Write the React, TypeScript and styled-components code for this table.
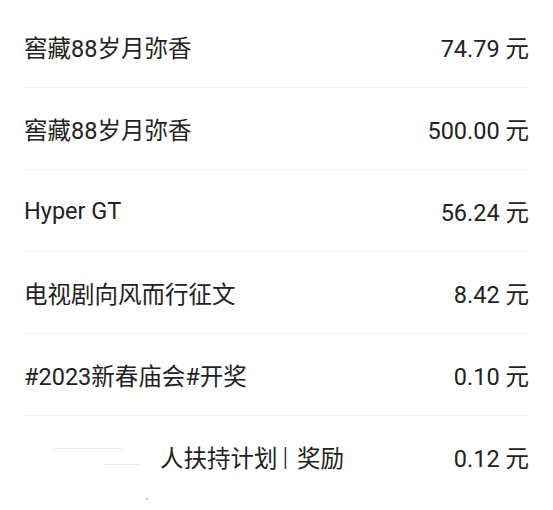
import React from "react";
import styled, { createGlobalStyle } from "styled-components";

const Global = createGlobalStyle`
  html, body { margin: 0; padding: 0; background: #ffffff; }
  body { font-family: Roboto, "Noto Sans CJK SC", sans-serif; }
`;

const List = styled.div`
  padding-top: 6px;
  display: flex;
  flex-direction: column;
`;

const Row = styled.div<{ $last?: boolean }>`
  height: 81px;
  margin: 0 24px;
  border-bottom: 1px solid ${(p) => (p.$last ? "transparent" : "#f2f2f2")};
  display: flex;
  align-items: center;
  justify-content: space-between;
  font-size: 23.5px;
  color: #222222;
`;

const Title = styled.div`
  display: flex;
  align-items: center;
  padding-top: 1px;
`;

const Amount = styled.div`
  white-space: pre;
  padding-top: 1px;
`;

const Redacted = styled.div`
  position: relative;
  width: 136px;
  height: 24px;
`;

const Smear = styled.span<{ $l: number; $t: number; $w: number }>`
  position: absolute;
  left: ${(p) => p.$l}px;
  top: ${(p) => p.$t}px;
  width: ${(p) => p.$w}px;
  height: 1px;
  background: #ececec;
`;

const Bar = styled.span`
  font-weight: 300;
  font-size: 25px;
  margin: 0 9px 0 5px;
`;

const Dot = styled.div`
  width: 2px;
  height: 2px;
  margin-left: 146px;
  background: #bbbbbb;
`;

const rows = [
  { t: "窖藏88岁月弥香", a: "74.79 元" },
  { t: "窖藏88岁月弥香", a: "500.00 元" },
  { t: "Hyper GT", a: "56.24 元" },
  { t: "电视剧向风而行征文", a: "8.42 元" },
  { t: "#2023新春庙会#开奖", a: "0.10 元" },
];

export default function App() {
  return (
    <>
      <Global />
      <List>
        {rows.map((r, i) => (
          <Row key={i}>
            <Title>{r.t}</Title>
            <Amount>{r.a}</Amount>
          </Row>
        ))}
        <Row $last>
          <Title>
            <Redacted>
              <Smear $l={30} $t={3} $w={68} />
              <Smear $l={79} $t={19} $w={36} />
            </Redacted>
            人扶持计划<Bar>|</Bar>奖励
          </Title>
          <Amount>0.12 元</Amount>
        </Row>
        <Dot />
      </List>
    </>
  );
}
